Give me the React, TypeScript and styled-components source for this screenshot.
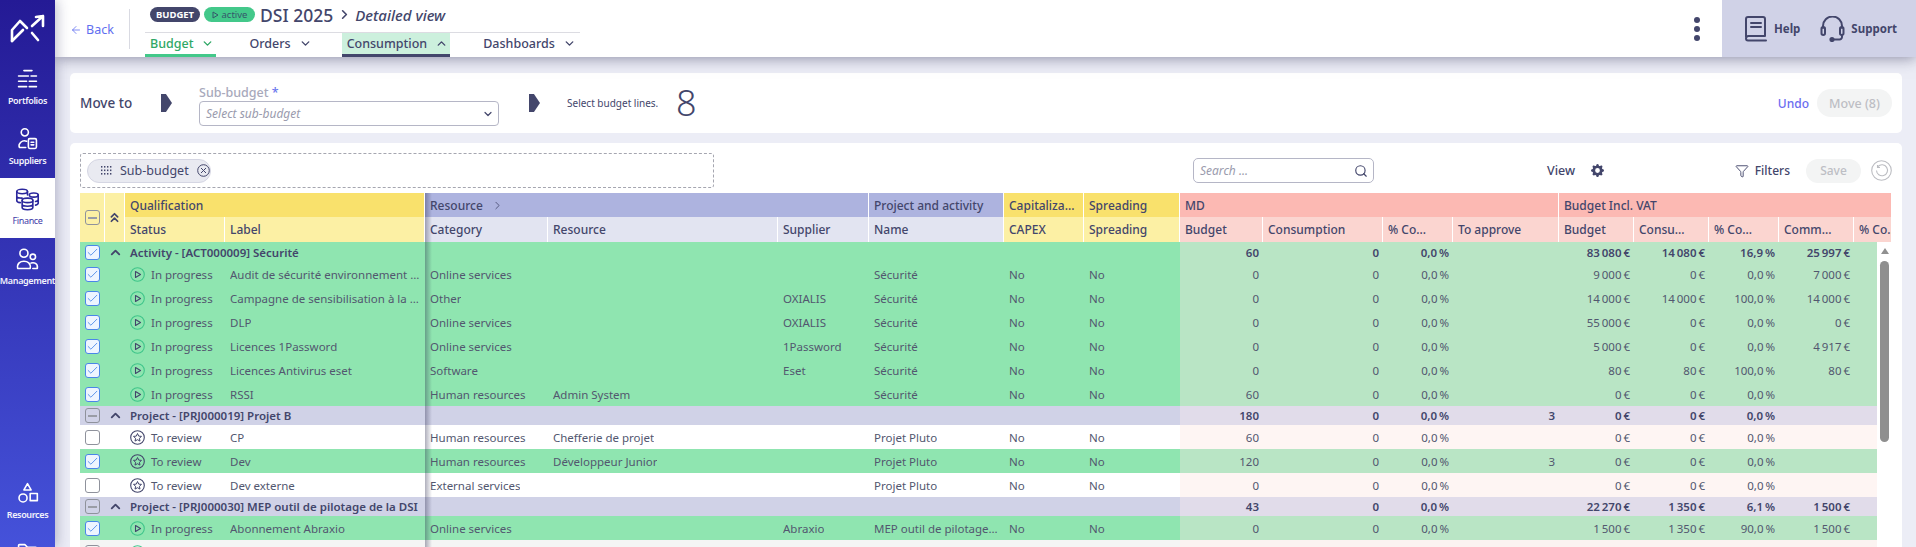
import { ReactNode } from 'react';
import { ArrowLeft, Check, ChevronDown, ChevronRight, ChevronUp, ChevronsUp, Funnel, Search } from 'lucide-react';
import { BsGearFill } from 'react-icons/bs';
import styled, { createGlobalStyle } from 'styled-components';

const NAVY = '#43466b';
const FONT = '"Noto Sans", "Open Sans", sans-serif';

const GlobalStyle = createGlobalStyle`
  html, body { margin: 0; height: 100%; overflow: hidden; }
  body { font-family: ${FONT}; color: ${NAVY}; background: #ecedf6; }
  * { box-sizing: border-box; }
`;

const Page = styled.div`
  display: flex;
  height: 547px;
  overflow: hidden;
`;

/* ---------- sidebar ---------- */

const Sidebar = styled.nav`
  width: 55px;
  flex-shrink: 0;
  height: 100%;
  overflow: hidden;
  background: linear-gradient(180deg, #241a95 0%, #4552da 100%);
  position: relative;
  z-index: 3;
  box-shadow: 2px 0 12px rgba(40, 40, 90, 0.3);
`;

const LogoBox = styled.div`
  height: 58px;
`;

const NavItem = styled.a<{ $active?: boolean }>`
  height: 60px;
  display: flex;
  flex-direction: column;
  align-items: center;
  gap: 2px;
  padding-top: 9px;
  white-space: nowrap;
  font-size: 9px;
  letter-spacing: -0.35px;
  font-weight: ${(p) => (p.$active ? 400 : 600)};
  color: ${(p) => (p.$active ? '#3d3aa8' : '#f2f2fc')};
  background: ${(p) => (p.$active ? '#fff' : 'transparent')};
`;

const BottomNav = styled.div`
  margin-top: 174px;
`;

/* ---------- top bar ---------- */

const Main = styled.div`
  flex: 1;
  min-width: 0;
  display: flex;
  flex-direction: column;
`;

const TopBar = styled.header`
  height: 57px;
  flex-shrink: 0;
  display: flex;
  background: #fff;
  position: relative;
  z-index: 2;
  box-shadow: 0 1px 14px rgba(40, 40, 80, 0.5);
`;

const BackLink = styled.a`
  display: flex;
  align-items: center;
  gap: 4px;
  width: 74px;
  padding: 2px 0 0 15px;
  font-size: 12.5px;
  color: #5f6ff0;
`;

const Divider = styled.div`
  width: 1px;
  height: 40px;
  margin-top: 9px;
  background: #d9dae2;
`;

const TitleBlock = styled.div`
  width: 435px;
  margin-left: 15px;
`;

const TitleRow = styled.div`
  height: 32px;
  display: flex;
  align-items: center;
  gap: 4px;
  padding: 0 0 3px 5px;
`;

const Badge = styled.span<{ $green?: boolean }>`
  height: 15px;
  display: inline-flex;
  align-items: center;
  justify-content: center;
  gap: 3px;
  border-radius: 8px;
  font-size: 9.5px;
  font-weight: ${(p) => (p.$green ? 400 : 700)};
  width: ${(p) => (p.$green ? '51px' : '50px')};
  background: ${(p) => (p.$green ? '#43c88a' : NAVY)};
  color: ${(p) => (p.$green ? '#35566a' : '#fff')};
`;

const Title = styled.span`
  margin-left: 1px;
  font-size: 17.5px;
  font-weight: 500;
`;

const TitleChevron = styled(ChevronRight)`
  margin: 0 -1px 0 0;
`;

const Subtitle = styled.span`
  font-size: 15px;
  font-style: italic;
  font-weight: 500;
`;

const Tabs = styled.div`
  height: 25px;
  display: flex;
  gap: 28px;
  border-top: 1px solid #dcdce2;
`;

const Tab = styled.a<{ $state?: 'green' | 'open' }>`
  display: flex;
  align-items: center;
  justify-content: space-between;
  gap: 11px;
  padding: 0 5px;
  font-size: 12.5px;
  font-weight: 500;
  color: ${(p) => (p.$state === 'green' ? '#2fa866' : NAVY)};
  background: ${(p) => (p.$state === 'open' ? '#ccf0dd' : 'transparent')};
  border-bottom: 3px solid
    ${(p) => (p.$state === 'green' ? '#43c88a' : p.$state === 'open' ? NAVY : 'transparent')};
  svg {
    margin: 0 -3px;
  }
`;

const Dots = styled.div`
  margin-left: auto;
  width: 26px;
  display: flex;
  flex-direction: column;
  justify-content: center;
  align-items: center;
  gap: 3px;
  span {
    width: 6px;
    height: 6px;
    border-radius: 50%;
    background: ${NAVY};
  }
`;

const HelpPanel = styled.div`
  width: 194px;
  margin-left: 12px;
  display: flex;
  align-items: center;
  gap: 6px;
  padding-left: 22px;
  background: #d0d2e7;
`;

const HelpLabel = styled.span`
  font-size: 11.5px;
  font-weight: 700;
  margin-right: 14px;
`;

/* ---------- content ---------- */

const Content = styled.div`
  flex: 1;
  min-height: 0;
  padding: 16px 14px 0 15px;
  display: flex;
  flex-direction: column;
  gap: 10px;
`;

const MoveCard = styled.section`
  height: 60px;
  flex-shrink: 0;
  display: flex;
  align-items: center;
  padding: 0 10px;
  background: #fff;
  border-radius: 5px;
`;

const MoveTo = styled.span`
  width: 81px;
  font-size: 13.5px;
  font-weight: 500;
`;

const Arrow = styled.span`
  width: 11px;
  height: 18px;
  background: ${NAVY};
  clip-path: polygon(0 0, 45% 0, 100% 50%, 45% 100%, 0 100%);
`;

const Field = styled.div`
  width: 300px;
  margin: 0 30px 0 27px;
  align-self: flex-start;
  padding-top: 11px;
`;

const FieldLabel = styled.div`
  height: 17px;
  font-size: 12.5px;
  font-weight: 500;
  color: #a8a9bb;
  b {
    color: #6a78ee;
    font-weight: 500;
  }
`;

const SelectBox = styled.div`
  height: 25px;
  display: flex;
  align-items: center;
  justify-content: space-between;
  padding: 0 4px 0 6px;
  border: 1px solid #b5b6c6;
  border-radius: 4px;
  font-size: 12px;
  font-style: italic;
  color: #9a9bad;
  svg {
    color: ${NAVY};
  }
`;

const Hint = styled.span`
  margin-left: 27px;
  width: 109px;
  font-size: 10px;
`;

const BigCount = styled.span`
  font-size: 36px;
  font-weight: 300;
  line-height: 1;
`;

const Undo = styled.a`
  margin-left: auto;
  font-size: 12px;
  font-weight: 500;
  color: #6a6cf0;
`;

const MoveButton = styled.button`
  width: 75px;
  height: 28px;
  margin-left: 8px;
  border: 0;
  border-radius: 14px;
  background: #f3f4f4;
  font: 500 12.5px ${FONT};
  color: #bdbec4;
`;

const TableCard = styled.section`
  flex: 1;
  min-height: 0;
  padding: 10px 10px 0;
  background: #fff;
  border-radius: 5px 5px 0 0;
  overflow: hidden;
`;

const Toolbar = styled.div`
  height: 35px;
  margin-bottom: 5px;
  display: flex;
  align-items: center;
`;

const DropZone = styled.div`
  width: 634px;
  height: 35px;
  display: flex;
  align-items: center;
  padding-left: 6px;
  border: 1px dashed #a5a6b0;
  border-radius: 3px;
`;

const Chip = styled.div`
  width: 124px;
  height: 24px;
  display: flex;
  align-items: center;
  gap: 8px;
  padding-left: 13px;
  border: 1px solid #d5d6e3;
  border-radius: 12px;
  background: #e9eaf1;
  font-size: 12.5px;
`;

const SearchBox = styled.div`
  width: 181px;
  height: 25px;
  margin-left: 479px;
  display: flex;
  align-items: center;
  justify-content: space-between;
  padding: 0 5px 0 6px;
  border: 1px solid #b5b6c6;
  border-radius: 5px;
  font-size: 12px;
  font-style: italic;
  color: #9a9bad;
  svg {
    color: ${NAVY};
  }
`;

const ViewLabel = styled.span`
  margin-left: 173px;
  font-size: 12.5px;
  font-weight: 500;
`;

const GearButton = styled.span`
  display: flex;
  margin-left: 16px;
  color: ${NAVY};
`;

const RightTools = styled.div`
  margin-left: auto;
  display: flex;
  align-items: center;
`;

const FiltersLabel = styled.span`
  margin-left: 6px;
  font-size: 12px;
  font-weight: 500;
`;

const SaveButton = styled.button`
  width: 55px;
  height: 24px;
  margin: 0 10px 0 16px;
  border: 0;
  border-radius: 12px;
  background: #f3f4f4;
  font: 500 12px ${FONT};
  color: #bdbec4;
`;

/* ---------- table ---------- */

const COLUMNS = '25px 20px 100px 200px 123px 230px 91px 135px 80px 96px 83px 120px 70px 106px 75px 75px 70px 75px 38px';

const headTones = {
  yellow: ['#f9e16c', '#fcf0a4'],
  blue: ['#adb3df', '#e2e4f1'],
  red: ['#fcb9b3', '#fbd5d0'],
};

type Tone = keyof typeof headTones;

const rowTones = {
  selected: ['#8fe5b0', '#b9e5c5'],
  group: ['#d0d2e7', '#e1dcea'],
  plain: ['#ffffff', '#fef5f3'],
  hover: ['#f4f5f4', '#fbf3f1'],
};

type RowKind = keyof typeof rowTones;

const DataTable = styled.div`
  position: relative;
  font-size: 11.5px;
  &::after {
    content: '';
    position: absolute;
    top: 0;
    bottom: 0;
    left: 345px;
    width: 7px;
    background: linear-gradient(90deg, rgba(35, 35, 70, 0.36), rgba(35, 35, 70, 0));
    pointer-events: none;
  }
`;

const Head = styled.div`
  display: grid;
  grid-template-columns: ${COLUMNS};
  grid-template-rows: 24px 25px;
`;

const HeadCell = styled.div<{ $tone: Tone; $sub?: boolean; $span?: number; $tall?: boolean }>`
  grid-column: span ${(p) => p.$span ?? 1};
  grid-row: span ${(p) => (p.$tall ? 2 : 1)};
  display: flex;
  align-items: center;
  justify-content: ${(p) => (p.$tall ? 'center' : 'flex-start')};
  gap: 8px;
  padding: ${(p) => (p.$tall ? '0' : '0 5px')};
  overflow: hidden;
  white-space: nowrap;
  font-size: 12px;
  font-weight: 500;
  background: ${(p) => headTones[p.$tone][p.$sub || p.$tall ? 1 : 0]};
  border-right: 1px solid #fff;
`;

const BodyWrap = styled.div`
  display: flex;
`;

const Rows = styled.div`
  width: 1797px;
  flex-shrink: 0;
`;

const Row = styled.div<{ $kind: RowKind }>`
  display: grid;
  grid-template-columns: ${COLUMNS};
  height: ${(p) => (p.$kind === 'group' ? '19px' : '24px')};
  overflow: hidden;
  background: ${(p) => rowTones[p.$kind][0]};
  color: ${(p) => (p.$kind === 'group' ? NAVY : '#52576f')};
  font-weight: ${(p) => (p.$kind === 'group' ? 600 : 400)};
  &:first-child {
    height: 20px;
    color: ${NAVY};
    font-weight: 600;
  }
`;

const Cell = styled.div<{ $kind?: RowKind; $right?: boolean; $span?: number }>`
  grid-column: span ${(p) => p.$span ?? 1};
  display: flex;
  align-items: center;
  justify-content: ${(p) => (p.$right ? 'flex-end' : 'flex-start')};
  gap: 6px;
  min-width: 0;
  padding: 0 ${(p) => (p.$right ? '4px' : '5px')};
  white-space: nowrap;
  overflow: hidden;
  background: ${(p) => (p.$kind ? rowTones[p.$kind][1] : 'transparent')};
`;

const CenterCell = styled(Cell)`
  padding: 0;
  justify-content: center;
`;

const Truncate = styled.span`
  overflow: hidden;
  text-overflow: ellipsis;
`;

const Box = styled.span<{ $state: 'checked' | 'empty' | 'mixed' }>`
  width: 15px;
  height: 15px;
  flex-shrink: 0;
  display: flex;
  align-items: center;
  justify-content: center;
  border-radius: 3px;
  border: 1.5px solid ${(p) => (p.$state === 'checked' ? '#4a86e8' : '#8f929c')};
  background: ${(p) => (p.$state === 'checked' ? '#eef5ff' : 'transparent')};
  color: #3f80e6;
  &::before {
    content: '';
    display: ${(p) => (p.$state === 'mixed' ? 'block' : 'none')};
    width: 9px;
    height: 2px;
    background: #9a9da6;
  }
`;

const ScrollTrack = styled.div`
  width: 15px;
  flex-shrink: 0;
  display: flex;
  flex-direction: column;
  align-items: center;
  padding-top: 6px;
`;

const ScrollUp = styled.span`
  width: 0;
  height: 0;
  border-left: 4.5px solid transparent;
  border-right: 4.5px solid transparent;
  border-bottom: 6px solid #909090;
`;

const ScrollThumb = styled.div`
  width: 9px;
  height: 181px;
  margin-top: 7px;
  border-radius: 5px;
  background: #8f8f8f;
`;

/* ---------- drawings ---------- */

const Logo = () => (
  <svg width="55" height="58" viewBox="0 0 55 58" fill="none" stroke="#fff" strokeWidth="2.6" strokeLinecap="round" strokeLinejoin="round">
    <path d="M12 41V30l8-9 7 7" />
    <path d="M12 41l11-11" />
    <path d="M32 26l11-10M36 17l7-1v10" />
    <path d="M32 33l6 7" />
  </svg>
);

const NavIcon = ({ children, color = '#fff' }: { children: ReactNode; color?: string }) => (
  <svg width="27" height="25" viewBox="0 0 30 28" fill="none" stroke={color} strokeWidth="1.8" strokeLinecap="round" strokeLinejoin="round">
    {children}
  </svg>
);

const StatusProgress = () => (
  <svg width="15" height="15" viewBox="0 0 15 15" fill="none" style={{ flexShrink: 0 }}>
    <circle cx="7.5" cy="7.5" r="6.8" stroke="#3fc58a" strokeWidth="1.1" />
    <path d="M5.5 4.5v6l5-3z" stroke={NAVY} strokeWidth="1.1" strokeLinejoin="round" />
  </svg>
);

const StatusReview = () => (
  <svg width="15" height="15" viewBox="0 0 15 15" fill="none" style={{ flexShrink: 0 }}>
    <circle cx="7.5" cy="7.5" r="6.8" stroke={NAVY} strokeWidth="1.1" />
    <path d="M7.5 3.5l1.2 2.6 2.8.3-2.1 1.9.6 2.8-2.5-1.4-2.5 1.4.6-2.8-2.1-1.9 2.8-.3z" stroke={NAVY} strokeWidth="1" strokeLinejoin="round" />
  </svg>
);

const Grip = () => (
  <svg width="11" height="10" viewBox="0 0 11 10" fill={NAVY}>
    {[0, 3.5, 7].map((y) =>
      [0, 3, 6, 9].map((x) => <rect key={`${x}-${y}`} x={x} y={y} width="1.4" height="1.6" />),
    )}
  </svg>
);

const ChipClose = () => (
  <svg width="13" height="13" viewBox="0 0 13 13" fill="none" stroke={NAVY} strokeWidth="1">
    <circle cx="6.5" cy="6.5" r="5.8" />
    <path d="M4 4l5 5M9 4l-5 5" />
  </svg>
);

const BookIcon = () => (
  <svg width="24" height="26" viewBox="0 0 24 26" fill="none" stroke={NAVY} strokeWidth="2" strokeLinecap="round" strokeLinejoin="round" style={{ flexShrink: 0 }}>
    <path d="M2 21V3a2 2 0 0 1 2-2h15a2 2 0 0 1 2 2v17H4.5A2.5 2.5 0 0 0 2 22.5 2 2 0 0 0 4 24.5h18" />
    <path d="M7 7h10M7 11h10" />
  </svg>
);

const HeadsetIcon = () => (
  <svg width="25" height="26" viewBox="0 0 25 26" fill="none" stroke={NAVY} strokeWidth="2" strokeLinecap="round" strokeLinejoin="round" style={{ flexShrink: 0 }}>
    <path d="M3 12V10a9.5 9.5 0 0 1 19 0v2" />
    <rect x="1.5" y="11" width="3.5" height="8" rx="1.7" />
    <rect x="20" y="11" width="3.5" height="8" rx="1.7" />
    <path d="M22 19v2a2.5 2.5 0 0 1-2.5 2.5H14" />
    <circle cx="12" cy="23.5" r="1.6" fill={NAVY} />
  </svg>
);

const ResetIcon = () => (
  <svg width="21" height="21" viewBox="0 0 21 21" fill="none" stroke="#bcbdc2" strokeWidth="1.1">
    <circle cx="10.5" cy="10.5" r="9.8" />
    <path d="M7 6.5a5.5 5.5 0 1 1-1.5 4M6.5 5v2.5H9" />
  </svg>
);

/* ---------- data ---------- */

type Line = {
  kind: RowKind;
  title?: string;
  status?: 'In progress' | 'To review';
  label?: string;
  category?: string;
  resource?: string;
  supplier?: string;
  name?: string;
  values: string[];
};

const nb = '\u202f';
const pct0 = `0,0${nb}%`;
const eur = (v: string) => `${v.replace(' ', nb)}${nb}€`;
const SEC = 'Sécurité';
const PLUTO = 'Projet Pluto';
const MEP = 'MEP outil de pilotage de la DSI';

const lines: Line[] = [
  { kind: 'selected', title: 'Activity - [ACT000009] Sécurité', values: ['60', '0', pct0, '', eur('83 080'), eur('14 080'), `16,9${nb}%`, eur('25 997')] },
  { kind: 'selected', status: 'In progress', label: 'Audit de sécurité environnement cloud', category: 'Online services', name: SEC, values: ['0', '0', pct0, '', eur('9 000'), eur('0'), pct0, eur('7 000')] },
  { kind: 'selected', status: 'In progress', label: 'Campagne de sensibilisation à la sécurité', category: 'Other', supplier: 'OXIALIS', name: SEC, values: ['0', '0', pct0, '', eur('14 000'), eur('14 000'), `100,0${nb}%`, eur('14 000')] },
  { kind: 'selected', status: 'In progress', label: 'DLP', category: 'Online services', supplier: 'OXIALIS', name: SEC, values: ['0', '0', pct0, '', eur('55 000'), eur('0'), pct0, eur('0')] },
  { kind: 'selected', status: 'In progress', label: 'Licences 1Password', category: 'Online services', supplier: '1Password', name: SEC, values: ['0', '0', pct0, '', eur('5 000'), eur('0'), pct0, eur('4 917')] },
  { kind: 'selected', status: 'In progress', label: 'Licences Antivirus eset', category: 'Software', supplier: 'Eset', name: SEC, values: ['0', '0', pct0, '', eur('80'), eur('80'), `100,0${nb}%`, eur('80')] },
  { kind: 'selected', status: 'In progress', label: 'RSSI', category: 'Human resources', resource: 'Admin System', name: SEC, values: ['60', '0', pct0, '', eur('0'), eur('0'), pct0, ''] },
  { kind: 'group', title: 'Project - [PRJ000019] Projet B', values: ['180', '0', pct0, '3', eur('0'), eur('0'), pct0, ''] },
  { kind: 'plain', status: 'To review', label: 'CP', category: 'Human resources', resource: 'Chefferie de projet', name: PLUTO, values: ['60', '0', pct0, '', eur('0'), eur('0'), pct0, ''] },
  { kind: 'selected', status: 'To review', label: 'Dev', category: 'Human resources', resource: 'Développeur Junior', name: PLUTO, values: ['120', '0', pct0, '3', eur('0'), eur('0'), pct0, ''] },
  { kind: 'plain', status: 'To review', label: 'Dev externe', category: 'External services', name: PLUTO, values: ['0', '0', pct0, '', eur('0'), eur('0'), pct0, ''] },
  { kind: 'group', title: 'Project - [PRJ000030] MEP outil de pilotage de la DSI', values: ['43', '0', pct0, '', eur('22 270'), eur('1 350'), `6,1${nb}%`, eur('1 500')] },
  { kind: 'selected', status: 'In progress', label: 'Abonnement Abraxio', category: 'Online services', supplier: 'Abraxio', name: MEP, values: ['0', '0', pct0, '', eur('1 500'), eur('1 350'), `90,0${nb}%`, eur('1 500')] },
  { kind: 'hover', status: 'In progress', label: 'Hébergement', category: 'Online services', resource: 'Intégrateur', name: MEP, values: ['0', '0', pct0, '', eur('0'), eur('0'), pct0, ''] },
];

const subHeads: [string, Tone][] = [
  ['Status', 'yellow'], ['Label', 'yellow'],
  ['Category', 'blue'], ['Resource', 'blue'], ['Supplier', 'blue'], ['Name', 'blue'],
  ['CAPEX', 'yellow'], ['Spreading', 'yellow'],
  ['Budget', 'red'], ['Consumption', 'red'], ['% Co...', 'red'], ['To approve', 'red'],
  ['Budget', 'red'], ['Consu...', 'red'], ['% Co...', 'red'], ['Comm...', 'red'], ['% Co...', 'red'],
];

const TableRow = ({ line }: { line: Line }) => {
  const selected = line.kind === 'selected';
  const mixed = line.kind === 'group';
  return (
    <Row $kind={line.kind}>
      <CenterCell>
        <Box $state={selected ? 'checked' : mixed ? 'mixed' : 'empty'}>
          {selected && <Check size={13} strokeWidth={1.5} />}
        </Box>
      </CenterCell>
      {line.title ? (
        <>
          <CenterCell>
            <ChevronUp size={15} strokeWidth={3} color={NAVY} />
          </CenterCell>
          <Cell $span={2}>{line.title}</Cell>
          <Cell $span={6} />
        </>
      ) : (
        <>
          <Cell />
          <Cell>
            {line.status === 'In progress' ? <StatusProgress /> : <StatusReview />}
            {line.status}
          </Cell>
          <Cell><Truncate>{line.label}</Truncate></Cell>
          <Cell><Truncate>{line.category}</Truncate></Cell>
          <Cell><Truncate>{line.resource}</Truncate></Cell>
          <Cell><Truncate>{line.supplier}</Truncate></Cell>
          <Cell><Truncate>{line.name}</Truncate></Cell>
          <Cell>No</Cell>
          <Cell>No</Cell>
        </>
      )}
      {line.values.map((v, i) => (
        <Cell key={i} $kind={line.kind} $right>{v}</Cell>
      ))}
      <Cell $kind={line.kind} />
    </Row>
  );
};

export default function App() {
  return (
    <Page>
      <GlobalStyle />
      <Sidebar>
        <LogoBox>
          <Logo />
        </LogoBox>
        <NavItem>
          <NavIcon>
            <path d="M11 4h9M5 10h11M19 10h6M5 16h9M17 16h8M5 22h9M17 22h8" />
          </NavIcon>
          Portfolios
        </NavItem>
        <NavItem>
          <NavIcon>
            <circle cx="12" cy="6" r="4" />
            <path d="M6 23h7M6 23a6 5.5 0 0 1 8-7" />
            <rect x="16" y="13" width="9" height="11" rx="1.5" />
            <path d="M19 17h3M19 20h3" />
          </NavIcon>
          Suppliers
        </NavItem>
        <NavItem $active>
          <NavIcon color="#2a269c">
            <ellipse cx="9" cy="5" rx="6" ry="2.5" />
            <path d="M3 5v10c0 1.2 2 2.3 4 2.5M15 5v4M3 10c0 1.4 2.6 2.5 6 2.5" />
            <ellipse cx="22" cy="9" rx="5" ry="2.3" />
            <path d="M27 9v9c0 1-1.2 2-3 2.3M27 14c0 1-1.2 2-3 2.3" />
            <ellipse cx="15" cy="15" rx="6" ry="2.5" />
            <path d="M9 15v8c0 1.4 2.7 2.5 6 2.5s6-1.1 6-2.5v-8M9 19c0 1.4 2.7 2.5 6 2.5s6-1.1 6-2.5" />
          </NavIcon>
          Finance
        </NavItem>
        <NavItem>
          <NavIcon>
            <circle cx="11" cy="7" r="4.5" />
            <circle cx="21" cy="11" r="3" />
            <path d="M4 24c-1-6 3-8 7-8s8 2 7 8zM19 18c3-1 8 0 7 6h-5" />
          </NavIcon>
          Management
        </NavItem>
        <BottomNav>
          <NavItem>
            <NavIcon>
              <path d="M15 3l4 7h-8z" />
              <circle cx="10" cy="19" r="4.5" />
              <rect x="18" y="14" width="8" height="8" />
            </NavIcon>
            Resources
          </NavItem>
          <NavItem>
            <NavIcon>
              <path d="M5 8V5a1 1 0 0 1 1-1h6l3 3h9a1 1 0 0 1 1 1v14H5z" />
            </NavIcon>
            Documents
          </NavItem>
        </BottomNav>
      </Sidebar>

      <Main>
        <TopBar>
          <BackLink>
            <ArrowLeft size={12} strokeWidth={1.6} />
            Back
          </BackLink>
          <Divider />
          <TitleBlock>
            <TitleRow>
              <Badge>BUDGET</Badge>
              <Badge $green>
                <svg width="7" height="8" viewBox="0 0 7 8" fill="none" stroke="#35566a" strokeWidth="1">
                  <path d="M1 1v6l5-3z" />
                </svg>
                active
              </Badge>
              <Title>DSI 2025</Title>
              <TitleChevron size={15} strokeWidth={2.6} />
              <Subtitle>Detailed view</Subtitle>
            </TitleRow>
            <Tabs>
              <Tab $state="green">Budget <ChevronDown size={13} strokeWidth={2.6} /></Tab>
              <Tab>Orders <ChevronDown size={13} strokeWidth={2.6} /></Tab>
              <Tab $state="open">Consumption <ChevronUp size={13} strokeWidth={2.6} /></Tab>
              <Tab>Dashboards <ChevronDown size={13} strokeWidth={2.6} /></Tab>
            </Tabs>
          </TitleBlock>
          <Dots><span /><span /><span /></Dots>
          <HelpPanel>
            <BookIcon />
            <HelpLabel>Help</HelpLabel>
            <HeadsetIcon />
            <HelpLabel>Support</HelpLabel>
          </HelpPanel>
        </TopBar>

        <Content>
          <MoveCard>
            <MoveTo>Move to</MoveTo>
            <Arrow />
            <Field>
              <FieldLabel>Sub-budget <b>*</b></FieldLabel>
              <SelectBox>
                Select sub-budget
                <ChevronDown size={12} strokeWidth={2.4} />
              </SelectBox>
            </Field>
            <Arrow />
            <Hint>Select budget lines.</Hint>
            <BigCount>8</BigCount>
            <Undo>Undo</Undo>
            <MoveButton>Move (8)</MoveButton>
          </MoveCard>

          <TableCard>
            <Toolbar>
              <DropZone>
                <Chip>
                  <Grip />
                  Sub-budget
                  <ChipClose />
                </Chip>
              </DropZone>
              <SearchBox>
                Search ...
                <Search size={14} strokeWidth={2} />
              </SearchBox>
              <ViewLabel>View</ViewLabel>
              <GearButton><BsGearFill size={13} /></GearButton>
              <RightTools>
                <Funnel size={14} strokeWidth={1.6} />
                <FiltersLabel>Filters</FiltersLabel>
                <SaveButton>Save</SaveButton>
                <ResetIcon />
              </RightTools>
            </Toolbar>

            <DataTable>
              <Head>
                <HeadCell $tone="yellow" $tall><Box $state="mixed" /></HeadCell>
                <HeadCell $tone="yellow" $tall><ChevronsUp size={15} strokeWidth={2.8} /></HeadCell>
                <HeadCell $tone="yellow" $span={2}>Qualification</HeadCell>
                <HeadCell $tone="blue" $span={3}>Resource <ChevronRight size={13} strokeWidth={1.5} /></HeadCell>
                <HeadCell $tone="blue">Project and activity</HeadCell>
                <HeadCell $tone="yellow">Capitaliza...</HeadCell>
                <HeadCell $tone="yellow">Spreading</HeadCell>
                <HeadCell $tone="red" $span={4}>MD</HeadCell>
                <HeadCell $tone="red" $span={5}>Budget Incl. VAT</HeadCell>
                {subHeads.map(([text, tone], i) => (
                  <HeadCell key={i} $tone={tone} $sub>{text}</HeadCell>
                ))}
              </Head>
              <BodyWrap>
                <Rows>
                  {lines.map((line, i) => <TableRow key={i} line={line} />)}
                </Rows>
                <ScrollTrack>
                  <ScrollUp />
                  <ScrollThumb />
                </ScrollTrack>
              </BodyWrap>
            </DataTable>
          </TableCard>
        </Content>
      </Main>
    </Page>
  );
}
